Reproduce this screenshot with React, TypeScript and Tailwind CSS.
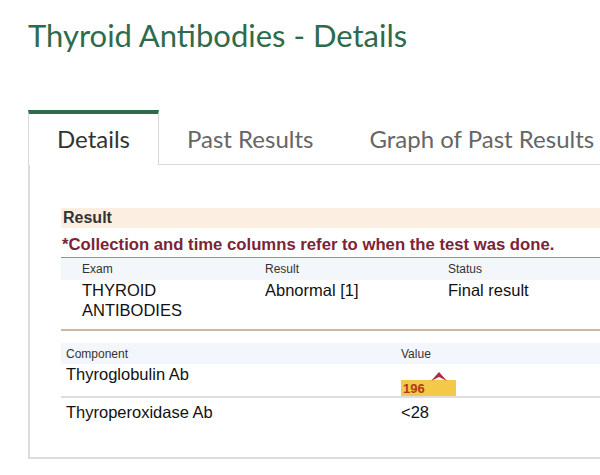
import React from 'react'

const sans = { fontFamily: '"Liberation Sans", Arial, sans-serif' }
const title = { fontFamily: 'Lato, "Open Sans", sans-serif' }

export default function App() {
  return (
    <div className="h-[475px] w-[600px] overflow-hidden bg-white">
      <h1 style={title} className="pl-[28px] pt-[13px] text-[31px] leading-[44px] text-[#2f6a4c]">
        Thyroid Antibodies - Details
      </h1>

      {/* tabs */}
      <div style={title} className="mt-[53px] flex h-[55px] pl-[28px]">
        <div className="flex w-[131px] items-center justify-center border-x border-t-4 border-x-[#d9d9d9] border-t-[#2f6a4c] pb-[2px] text-[24px] text-[#333]">
          Details
        </div>
        <div className="flex flex-1 items-center border-b border-[#d9d9d9] pt-[3px] text-[24px] text-[#666]">
          <span className="ml-[28px]">Past Results</span>
          <span className="ml-[56px] whitespace-nowrap">Graph of Past Results</span>
        </div>
      </div>

      {/* panel */}
      <div style={sans} className="ml-[28px] h-[294px] border-b-2 border-l-2 border-[#dcdcdc] pl-[31px] pt-[43px]">
        <div className="flex h-[20px] items-center bg-[#fcefe1] pl-[2px] text-[16px] font-bold text-[#333]">Result</div>
        <div className="flex h-[29px] items-end pb-[2px] pl-[1px] text-[16.7px] font-bold leading-[20px] text-[#7b2436]">
          *Collection and time columns refer to when the test was done.
        </div>
        <div className="border-t border-[#7d97b3]">
          <div className="flex h-[22px] items-center bg-[#f3f6fb] pl-[21px] text-[12px] text-[#333]">
            <span className="w-[183px]">Exam</span>
            <span className="w-[183px]">Result</span>
            <span>Status</span>
          </div>
          <div className="flex h-[49px] pl-[21px] text-[16.5px] leading-[20px] text-[#111]">
            <span className="w-[183px]">
              THYROID
              <br />
              ANTIBODIES
            </span>
            <span className="w-[183px]">Abnormal [1]</span>
            <span>Final result</span>
          </div>
        </div>
        <div className="h-[2px] bg-[#cdb99f]" />

        <div className="mt-[12px]">
          <div className="flex h-[21px] items-center bg-[#f3f6fb] pl-[5px] text-[12px] text-[#333]">
            <span className="w-[335px]">Component</span>
            <span>Value</span>
          </div>
          <div className="flex h-[34px] border-b-2 border-[#dedede] pl-[5px] text-[16.5px] leading-[20px] text-[#111]">
            <span className="w-[335px]">Thyroglobulin Ab</span>
            <div className="relative mt-[16px] h-[16px] w-[55px] bg-[#f4c94a]">
              <span className="absolute bottom-0 left-[2px] text-[13px] font-bold leading-[14px] text-[#b23a1c]">196</span>
              <svg className="absolute left-[29px] top-[-9px]" width="18" height="11" viewBox="0 0 18 11">
                <path d="M1 10 L9 1 L17 10 L9 6 Z" fill="#b5293a" />
              </svg>
            </div>
          </div>
          <div className="flex h-[28px] items-center pl-[5px] text-[16.5px] text-[#111]">
            <span className="w-[335px]">Thyroperoxidase Ab</span>
            <span>&lt;28</span>
          </div>
        </div>
      </div>
    </div>
  )
}
